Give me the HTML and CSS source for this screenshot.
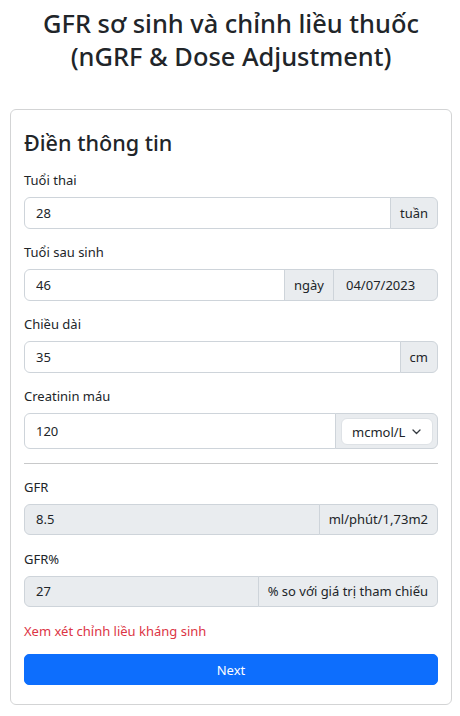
FILE: index.html
```html
<!DOCTYPE html>
<html lang="vi">
<head>
<meta charset="UTF-8">
<meta name="viewport" content="width=device-width, initial-scale=1.0">
<title>GFR sơ sinh</title>
<link rel="stylesheet" href="styles.css">
</head>
<body>
<div class="page">
  <h1 class="title">GFR sơ sinh và chỉnh liều thuốc (nGRF &amp; Dose Adjustment)</h1>

  <div class="card">
    <h3 class="card-title">Điền thông tin</h3>

    <div class="field">
      <label class="label">Tuổi thai</label>
      <div class="input-group">
        <input class="control" type="text" value="28">
        <span class="addon">tuần</span>
      </div>
    </div>

    <div class="field">
      <label class="label">Tuổi sau sinh</label>
      <div class="input-group">
        <input class="control" type="text" value="46">
        <span class="addon">ngày</span>
        <input class="control control-date" type="text" value="04/07/2023" disabled>
      </div>
    </div>

    <div class="field">
      <label class="label">Chiều dài</label>
      <div class="input-group">
        <input class="control" type="text" value="35">
        <span class="addon">cm</span>
      </div>
    </div>

    <div class="field">
      <label class="label">Creatinin máu</label>
      <div class="input-group input-group-select">
        <input class="control" type="text" value="120">
        <span class="addon addon-select">
          <span class="select-wrap">
            <select class="unit-select">
              <option>mcmol/L</option>
              <option>mg/dL</option>
            </select>
            <svg class="chevron" width="9" height="6" viewBox="0 0 9 6"><path d="M1 1l3.5 3.5L8 1" fill="none" stroke="#343a40" stroke-width="1.3" stroke-linecap="round" stroke-linejoin="round"/></svg>
          </span>
        </span>
      </div>
    </div>

    <hr class="divider">

    <div class="field">
      <label class="label">GFR</label>
      <div class="input-group">
        <input class="control" type="text" value="8.5" disabled>
        <span class="addon">ml/phút/1,73m2</span>
      </div>
    </div>

    <div class="field">
      <label class="label">GFR%</label>
      <div class="input-group">
        <input class="control" type="text" value="27" disabled>
        <span class="addon">% so với giá trị tham chiếu</span>
      </div>
    </div>

    <p class="warning">Xem xét chỉnh liều kháng sinh</p>

    <button class="btn-next" type="button">Next</button>
  </div>
</div>
</body>
</html>
```

FILE: styles.css
```css
* {
  box-sizing: border-box;
}

body {
  margin: 0;
  font-family: "Noto Sans", "Open Sans", sans-serif;
  font-size: 13px;
  color: #212529;
  background: #fff;
}

.page {
  padding: 7px 8px 0 10px;
}

.title {
  margin: 0 0 37px;
  font-size: 25.4px;
  line-height: 32.5px;
  font-weight: 500;
  text-align: center;
}

.card {
  border: 1px solid #d3d4d5;
  border-radius: 6px;
  padding: 19px 13px 19px;
}

.card-title {
  margin: 0 0 12px;
  font-size: 21.6px;
  line-height: 28px;
  font-weight: 500;
}

.field {
  margin-bottom: 12.5px;
}

.label {
  display: block;
  padding-top: 1px;
  margin-bottom: 6px;
  line-height: 21px;
}

.input-group {
  display: flex;
  align-items: stretch;
}

.control {
  flex: 1 1 auto;
  min-width: 0;
  height: 31.5px;
  padding: 4px 11px;
  font: inherit;
  color: #212529;
  background: #fff;
  border: 1px solid #ced4da;
  border-radius: 6px 0 0 6px;
}

.control:disabled {
  background: #e9ecef;
  color: #212529;
  -webkit-text-fill-color: #212529;
  opacity: 1;
}

.addon {
  display: flex;
  align-items: center;
  padding: 4px 9px;
  margin-left: -1px;
  white-space: nowrap;
  background: #e9ecef;
  border: 1px solid #ced4da;
  border-radius: 0 6px 6px 0;
}

.input-group .control-date {
  flex: 0 0 105px;
  margin-left: -1px;
  padding: 4px 12px;
  border-radius: 0 6px 6px 0;
}

.input-group .addon:not(:last-child) {
  border-radius: 0;
}

.input-group-select .control {
  height: 36px;
}

.addon-select {
  flex: 0 0 103px;
  padding: 4px 4px 3px 5px;
}

.select-wrap {
  position: relative;
  display: block;
  width: 100%;
}

.unit-select {
  display: block;
  width: 100%;
  height: 27px;
  padding: 0 24px 0 10px;
  font: inherit;
  color: #212529;
  background: #fff;
  border: 1px solid #dee2e6;
  border-radius: 6px;
  appearance: none;
  -webkit-appearance: none;
}

.chevron {
  position: absolute;
  right: 12px;
  top: 11px;
  pointer-events: none;
}

.divider {
  margin: 14px 0 11.5px;
  border: 0;
  border-top: 1px solid #c8c9ca;
}

.warning {
  margin: 0 0 12px;
  padding-top: 1px;
  line-height: 21px;
  color: #dc3545;
}

.btn-next {
  display: block;
  width: 100%;
  height: 31.5px;
  padding: 1px 0 0;
  font: inherit;
  color: #fff;
  background: #0d6efd;
  border: 1px solid #0d6efd;
  border-radius: 5px;
}
```
